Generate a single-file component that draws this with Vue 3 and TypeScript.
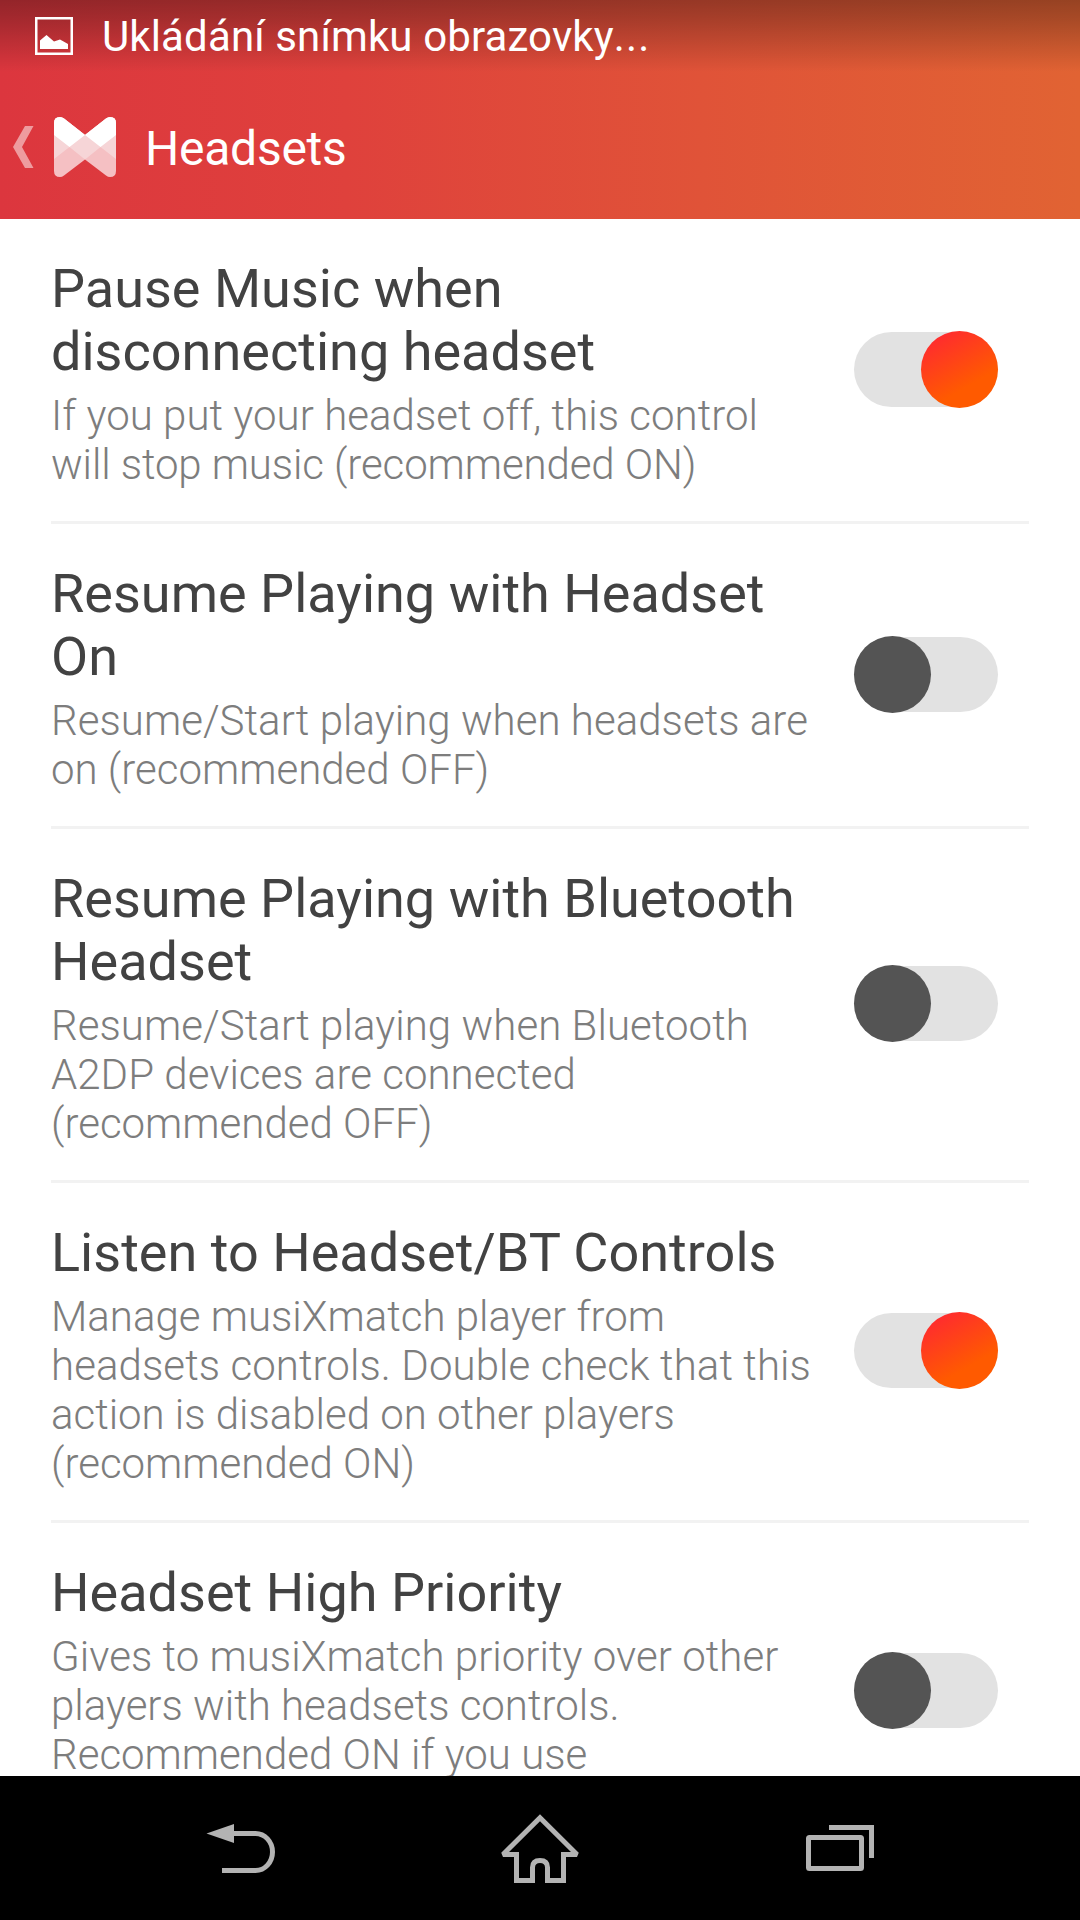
<script setup lang="ts">
import { ref } from 'vue'

interface Line {
  text: string
  tracking?: number
}

interface Setting {
  title: string[]
  summary: Line[]
  on: boolean
}

const settings = ref<Setting[]>([
  {
    title: ['Pause Music when', 'disconnecting headset'],
    summary: [
      { text: 'If you put your headset off, this control' },
      { text: 'will stop music (recommended ON)', tracking: -0.1 },
    ],
    on: true,
  },
  {
    title: ['Resume Playing with Headset', 'On'],
    summary: [{ text: 'Resume/Start playing when headsets are' }, { text: 'on (recommended OFF)', tracking: 0 }],
    on: false,
  },
  {
    title: ['Resume Playing with Bluetooth', 'Headset'],
    summary: [
      { text: 'Resume/Start playing when Bluetooth', tracking: 0.06 },
      { text: 'A2DP devices are connected' },
      { text: '(recommended OFF)', tracking: 0 },
    ],
    on: false,
  },
  {
    title: ['Listen to Headset/BT Controls'],
    summary: [
      { text: 'Manage musiXmatch player from', tracking: 0 },
      { text: 'headsets controls. Double check that this', tracking: 0.08 },
      { text: 'action is disabled on other players', tracking: -0.02 },
      { text: '(recommended ON)', tracking: 0 },
    ],
    on: true,
  },
  {
    title: ['Headset High Priority'],
    summary: [
      { text: 'Gives to musiXmatch priority over other' },
      { text: 'players with headsets controls.', tracking: 0 },
      { text: 'Recommended ON if you use', tracking: 0 },
    ],
    on: false,
  },
])
</script>

<template>
  <div class="screen">
    <header class="header">
      <div class="status">
        <svg class="picture" width="38" height="38" viewBox="0 0 38 38">
          <rect x="1.25" y="1.25" width="35.5" height="35.5" fill="none" stroke="#fff" stroke-width="2.5" />
          <path d="M5 32V23.500L11.500 18L19 24.500L25 22.500L33 27V32Z" fill="#fff" />
        </svg>
        <span class="notice">Ukládání snímku obrazovky<span class="dots">...</span></span>
      </div>
      <div class="bar">
        <svg class="chevron" width="21" height="42" viewBox="0 0 21 42">
          <path d="M12 0H20.5L9 21L20.5 42H12L0 21Z" fill="#fff" fill-opacity=".5" />
        </svg>
        <svg class="logo" width="62" height="60" viewBox="0 0 62 60">
          <defs>
            <clipPath id="bow">
              <path d="M0 6Q0 0 6 0Q8 0 10 1.5L31 18L52 1.5Q54 0 56 0Q62 0 62 6V54Q62 60 56 60Q54 60 52 58.5L31 42.5L10 58.5Q8 60 6 60Q0 60 0 54Z" />
            </clipPath>
          </defs>
          <g clip-path="url(#bow)">
            <rect width="62" height="60" fill="#f5c0c3" />
            <path d="M0 0H62V42L46.5 30L31 42.5L15.5 30L0 42Z" fill="#f6d5d7" />
            <path d="M0 0H31V18L15.5 30L0 18ZM62 0H31V18L46.5 30L62 18Z" fill="#fff" />
          </g>
        </svg>
        <h1>Headsets</h1>
      </div>
    </header>

    <main class="list">
      <section v-for="item in settings" :key="item.title[0]" class="row">
        <div class="copy">
          <h2><span v-for="line in item.title" :key="line">{{ line }}</span></h2>
          <p>
            <span
              v-for="line in item.summary"
              :key="line.text"
              :style="{ letterSpacing: `${line.tracking ?? 0.03}px` }"
            >{{ line.text }}</span>
          </p>
        </div>
        <button
          class="toggle"
          :class="{ on: item.on }"
          role="switch"
          :aria-checked="item.on"
          :aria-label="item.title.join(' ')"
          @click="item.on = !item.on"
        >
          <i class="thumb"></i>
        </button>
      </section>
    </main>

    <nav class="nav">
      <svg width="68" height="50" viewBox="0 0 68 50" overflow="visible">
        <path d="M-.5 10.500L27 1V20Z" fill="#b3b3b3" />
        <path d="M26 10.500H48.500A17 18.500 0 0 1 48.500 47.500H15" fill="none" stroke="#b3b3b3" stroke-width="5" />
      </svg>
      <svg width="78" height="70" viewBox="0 0 78 70" overflow="visible">
        <path
          d="M39 4.800L2 41.500H15.500V67.500H31.500V54.500Q31.500 47.500 39 47.500Q46.500 47.500 46.500 54.500V67.500H62.500V41.500H76Z"
          fill="none" stroke="#b3b3b3" stroke-width="5" stroke-linejoin="miter" stroke-miterlimit="2"
        />
      </svg>
      <svg width="68" height="46" viewBox="-1 0 68 46" overflow="visible">
        <rect x="2.5" y="12.500" width="53" height="31" rx="1" fill="none" stroke="#b3b3b3" stroke-width="5" />
        <path d="M23 2.500H65.500V33" fill="none" stroke="#b3b3b3" stroke-width="5" />
      </svg>
    </nav>
  </div>
</template>

<style>
body {
  background: #fff;
}
</style>

<style scoped>
.screen {
  width: 1080px;
  height: 1920px;
  display: flex;
  flex-direction: column;
  overflow: hidden;
  background: #fff;
  font-family: Roboto, "Liberation Sans", sans-serif;
}
.header {
  flex: none;
  height: 219px;
  color: #fff;
  background:
    linear-gradient(to bottom, rgba(0, 0, 0, .33) 0, rgba(0, 0, 0, .26) 18px, rgba(0, 0, 0, 0) 72px),
    linear-gradient(90deg, #dc363e 0, #df413c 32%, #e05338 65%, #e16333 100%);
}
.status {
  height: 75px;
  box-sizing: border-box;
  padding: 12px 0 0 35px;
  display: flex;
  align-items: flex-start;
  font-size: 42px;
  line-height: 49px;
  white-space: nowrap;
}
.picture {
  margin: 5px 29px 0 0;
}
.notice {
  letter-spacing: .13px;
}
.dots {
  letter-spacing: 1.2px;
}
.bar {
  height: 144px;
  display: flex;
  align-items: center;
  padding-left: 13px;
}
.logo {
  margin-left: 20px;
}
h1 {
  margin: 3px 0 0 29px;
  font-size: 48px;
  line-height: 56px;
  font-weight: 400;
  letter-spacing: -.25px;
}
.list {
  flex: 1;
  min-height: 0;
  overflow: hidden;
  padding: 0 51px;
}
.row {
  display: flex;
  justify-content: space-between;
  align-items: center;
  padding-right: 31px;
  border-bottom: 3px solid #f2f2f2;
}
.copy {
  padding: 38px 0 32px;
}
.row:last-child {
  align-items: flex-start;
}
.row:last-child .toggle {
  margin-top: 129px;
}
h2,
p {
  margin: 0;
  white-space: nowrap;
}
h2 span,
p span {
  display: block;
}
h2 {
  font-size: 54px;
  line-height: 63px;
  font-weight: 400;
  letter-spacing: .02px;
  color: #424242;
}
p {
  margin-top: 8px;
  font-size: 42px;
  line-height: 49px;
  font-weight: 300;
  color: #7d7d7d;
}
.toggle {
  flex: none;
  display: flex;
  align-items: center;
  width: 144px;
  height: 77px;
  margin-bottom: 2px;
  padding: 0;
  border: 0;
  background: none;
  position: relative;
}
.toggle::before {
  content: "";
  position: absolute;
  inset: 1px 0;
  border-radius: 38px;
  background: #e2e2e2;
}
.thumb {
  position: relative;
  width: 77px;
  height: 77px;
  border-radius: 50%;
  background: #545454;
}
.toggle.on {
  justify-content: flex-end;
}
.toggle.on .thumb {
  background: linear-gradient(150deg, #ff2a30 10%, #ff5a00 68%);
}
.nav {
  flex: none;
  height: 144px;
  display: flex;
  justify-content: space-between;
  align-items: center;
  box-sizing: border-box;
  padding: 0 207px;
  background: #000;
}
</style>
